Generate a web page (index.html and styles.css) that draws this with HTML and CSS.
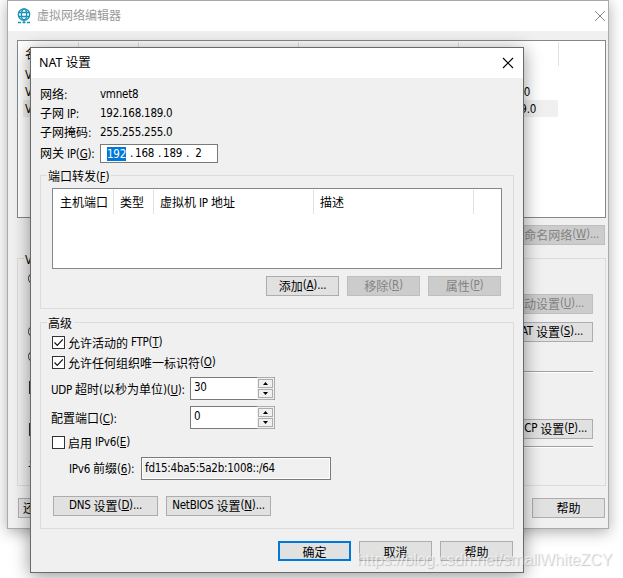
FILE: index.html
```
<!DOCTYPE html>
<html lang="zh-CN">
<head>
<meta charset="utf-8">
<title>NAT 设置</title>
<link rel="stylesheet" href="styles.css">
</head>
<body>
<div class="desktop">
  <section class="window editor">
    <header class="titlebar">
      <svg class="globe" width="14" height="16" viewBox="0 0 14 16" fill="none" stroke="#1593b8" stroke-width="1.3">
        <circle cx="7" cy="6.5" r="5.7"/><ellipse cx="7" cy="6.5" rx="2.6" ry="5.5"/>
        <path d="M1.8 4.5h10.4M1.8 8.5h10.4M7 12v2"/><path d="M1 14.5h3M5.5 14.5h3M10 14.5h3"/>
      </svg>
      <h1>虚拟网络编辑器</h1>
      <svg class="close" width="12" height="12" viewBox="0 0 12 12" stroke="#888"><path d="M1 1l10 10M11 1L1 11"/></svg>
    </header>
    <div class="editor-list">
      <div class="editor-head"><span>名</span><span></span><span></span><span></span><span></span></div>
      <div class="editor-row"><i>VM</i></div>
      <div class="editor-row"><i>VM</i><i class="tail">0</i></div>
      <div class="editor-row selected"><i>VM</i><i class="tail">9.0</i></div>
    </div>
    <button class="btn disabled rename">命名网络<i>(<u>W</u>)...</i></button>
    <fieldset class="group editor-group">
      <legend><i>VM</i></legend>
      <div class="left-edge">
        <span class="radio r1"></span><span class="radio r2"></span><span class="radio r3"></span>
        <span class="check c1"></span><span class="check c2"></span><span class="sub">子</span>
      </div>
      <div class="right-edge">
        <button class="btn disabled auto">动设置<i>(<u>U</u>)...</i></button>
        <button class="btn nat"><i>NAT </i>设置<i>(<u>S</u>)...</i></button>
        <div class="rule"></div>
        <button class="btn dhcp"><i>DHCP </i>设置<i>(<u>P</u>)...</i></button>
        <div class="rule last"></div>
      </div>
    </fieldset>
    <footer class="editor-foot">
      <button class="btn restore">还</button><button class="btn">帮助</button>
    </footer>
  </section>

  <section class="window dialog">
    <header class="titlebar">
      <h1>NAT 设置</h1>
      <svg class="close" width="12" height="12" viewBox="0 0 12 12" stroke="#000" stroke-width="1.1"><path d="M1 1l10 10M11 1L1 11"/></svg>
    </header>
    <dl class="info">
      <dt>网络<i>:</i></dt><dd><i>vmnet8</i></dd>
      <dt>子网<i> IP:</i></dt><dd><i>192.168.189.0</i></dd>
      <dt>子网掩码<i>:</i></dt><dd><i>255.255.255.0</i></dd>
    </dl>
    <div class="gateway">
      <label>网关<i> IP(<u>G</u>):</i></label>
      <div class="ip"><i class="picked">192</i><i>.</i><i class="oct">168</i><i>.</i><i class="oct">189</i><i>.</i><i class="oct end">2</i></div>
    </div>
    <fieldset class="group forward">
      <legend>端口转发<i>(<u>F</u>)</i></legend>
      <div class="ports"><div class="ports-head">
        <span>主机端口</span><span>类型</span><span>虚拟机<i> IP </i>地址</span><span>描述</span>
      </div></div>
      <div class="actions">
        <button class="btn">添加<i>(<u>A</u>)...</i></button>
        <button class="btn disabled">移除<i>(<u>R</u>)</i></button>
        <button class="btn disabled">属性<i>(<u>P</u>)</i></button>
      </div>
    </fieldset>
    <fieldset class="group advanced">
      <legend>高级</legend>
      <label class="option"><svg class="box" width="13" height="13" viewBox="0 0 11 11"><path d="M1.5 5.5l2.8 2.8L9.8 2.3"/></svg>允许活动的<i> FTP(<u>T</u>)</i></label>
      <label class="option"><svg class="box" width="13" height="13" viewBox="0 0 11 11"><path d="M1.5 5.5l2.8 2.8L9.8 2.3"/></svg>允许任何组织唯一标识符<i>(<u>O</u>)</i></label>
      <div class="field">
        <label><i>UDP </i>超时<i>(</i>以秒为单位<i>)(<u>U</u>):</i></label>
        <div class="spin"><i>30</i><div class="arrows"><b class="up"></b><b class="down"></b></div></div>
      </div>
      <div class="field second">
        <label>配置端口<i>(<u>C</u>):</i></label>
        <div class="spin"><i>0</i><div class="arrows"><b class="up"></b><b class="down"></b></div></div>
      </div>
      <label class="option ipv6"><span class="box"></span>启用<i> IPv6(<u>E</u>)</i></label>
      <div class="prefix">
        <label><i>IPv6 </i>前缀<i>(<u>6</u>):</i></label>
        <div class="readonly"><i>fd15:4ba5:5a2b:1008::/64</i></div>
      </div>
      <div class="more">
        <button class="btn"><i>DNS </i>设置<i>(<u>D</u>)...</i></button>
        <button class="btn"><i>NetBIOS </i>设置<i>(<u>N</u>)...</i></button>
      </div>
    </fieldset>
    <footer class="dialog-foot">
      <button class="btn primary">确定</button><button class="btn">取消</button><button class="btn">帮助</button>
    </footer>
  </section>
  <div class="watermark">https://blog.csdn.net/smallWhiteZCY</div>
</div>
</body>
</html>
```
FILE: styles.css
```
* { box-sizing: border-box; }
body { margin: 0; background: #fff; }
body, button { font: 12px/15px "Noto Sans CJK SC", sans-serif; color: #000; }
i { font: 11.5px/15px "DejaVu Sans Condensed", "DejaVu Sans", sans-serif; font-stretch: condensed; letter-spacing: -.25px; white-space: pre; }
u { text-underline-offset: 1px; text-decoration-thickness: 1px; }
h1, dl, dd { margin: 0; }
.desktop { position: relative; width: 623px; height: 578px; overflow: hidden; }
.window { position: absolute; background: #f0f0f0; border: 1px solid #aaa; }
.editor { left: 7px; top: 0; width: 602px; height: 529px; box-shadow: 0 3px 14px rgba(0,0,0,.32); }
.dialog { left: 30px; top: 47px; width: 494px; height: 526px; border-color: #6a6a6a; box-shadow: 0 3px 17px rgba(0,0,0,.42); }

.titlebar { display: flex; align-items: center; height: 30px; background: #fff; padding: 0 9px 0 8px; }
.titlebar h1 { flex: 1; font: 12.5px/18px "Noto Sans", "Noto Sans CJK SC", sans-serif; }
.editor .titlebar { padding: 0 2px 0 9px; }
.editor h1 { color: #999; margin-left: 6px; font-size: 12px; }
.close { display: block; }

.btn { display: flex; align-items: center; justify-content: center; width: 73px; height: 20px; padding: 0 0 1px; background: #e1e1e1; border: 1px solid #adadad; white-space: nowrap; border-radius: 0; }
.btn.disabled { background: #ccc; border-color: #bfbfbf; color: #838383; }
.btn.primary { border: 2px solid #0078d7; }

.editor-list { width: 589px; height: 178px; margin: 9px 0 0 9px; background: #fff; border: 1px solid #828790; padding-top: 1px; }
.editor-head { display: flex; height: 24px; }
.editor-head span { width: 60px; border-right: 1px solid #e0e0e0; padding: 4px 0 0 7px; }
.editor-head span:nth-child(1) { width: 61px; }
.editor-head span:nth-child(3), .editor-head span:nth-child(4) { width: 160px; }
.editor-head span:nth-child(5) { width: 100px; }
.editor-row { display: flex; justify-content: space-between; width: 535px; height: 17px; margin-left: 5px; padding: 2px 28px 0 2px; }
.editor-row.selected { background: #f0f0f0; padding-right: 22px; }
.rename { width: 110px; margin: 7px 0 0 487px; justify-content: flex-end; padding-right: 5px; }

.group { min-width: 0; margin: 0; padding: 0; border: 1px solid #dcdcdc; }
.group legend { height: 15px; margin-left: 6px; padding: 0 2px 0 1px; }
.editor-group { width: 589px; height: 235px; margin: 6px 0 0 9px; display: flex; justify-content: space-between; }
.left-edge { padding-left: 10px; }
.left-edge span { display: block; }
.radio { width: 13px; height: 13px; border: 1px solid #333; border-radius: 50%; background: #fff; }
.r1 { margin-top: 6px; } .r2 { margin-top: 40px; } .r3 { margin-top: 12px; }
.check { width: 13px; height: 13px; margin-left: 1px; border: 1px solid #333; background: #fff; }
.c1 { margin-top: 18px; } .c2 { margin-top: 29px; }
.sub { margin-top: 22px; }
.right-edge { width: 106px; margin-right: 12px; }
.right-edge .btn { justify-content: flex-end; width: 106px; }
.auto { margin-top: 28px; padding-right: 8px; }
.nat { margin-top: 8px; padding-right: 9px; }
.dhcp { margin-top: 46px; padding-right: 5px; }
.rule { height: 2px; margin-top: 29px; background: #a0a0a0; border-bottom: 1px solid #fff; }
.rule.last { margin-top: 7px; }
.editor-foot { display: flex; justify-content: space-between; margin: 12px 3px 0 10px; }
.restore { justify-content: flex-start; padding-left: 4px; }

.info { display: grid; grid-template-columns: 60px auto; grid-auto-rows: 19px; align-items: center; margin: 7px 0 0 9px; }
.info dd { margin-top: -2px; }
.gateway { display: flex; align-items: center; height: 19px; margin: 2px 0 0 9px; }
.gateway label { width: 60px; white-space: nowrap; }
.ip { display: flex; align-items: center; width: 118px; height: 19px; padding-left: 6px; background: #fff; border: 1px solid #7a7a7a; }
.picked { width: 19px; height: 14px; line-height: 14px; background: #0078d7; color: #fff; margin-right: 4px; }
.oct { width: 20px; margin: 0 3px 0 2px; }
.oct.end { padding-left: 4px; }
.forward { width: 474px; height: 141px; margin: 5px 0 0 9px; }
.ports { width: 450px; height: 81px; margin: 5px 0 0 11px; background: #fff; border: 1px solid #828790; padding-top: 1px; }
.ports-head { display: flex; height: 24px; }
.ports-head span { height: 24px; border-right: 1px solid #e0e0e0; padding: 4px 0 0 6px; white-space: nowrap; }
.ports-head span:nth-child(1) { width: 61px; padding-left: 7px; }
.ports-head span:nth-child(2) { width: 40px; }
.ports-head span:nth-child(3), .ports-head span:nth-child(4) { width: 160px; }
.actions { display: flex; gap: 8px; margin: 7px 0 0 225px; }
.advanced { width: 474px; height: 214px; margin: 6px 0 0 9px; }
.option { display: flex; align-items: center; height: 13px; margin: 6px 0 0 11px; }
.option + .option { margin-top: 7px; }
.box { width: 13px; height: 13px; margin-right: 3px; background: #fff; border: 1px solid #333; }
.box path { fill: none; stroke: #111; stroke-width: 1.2; }
.field { display: flex; align-items: center; height: 23px; margin: 8px 0 0 10px; }
.field.second { margin-top: 6px; }
.field label { width: 139px; white-space: nowrap; padding-top: 1px; }
.spin { display: flex; justify-content: space-between; width: 85px; height: 23px; padding: 2px 0 0 3px; background: #fff; border: 1px solid #7a7a7a; border-right-color: #adadad; }
.arrows { width: 17px; height: 23px; margin-top: -3px; padding: 1px 1px 1px; background: #f0f0f0; border: solid #abadb3; border-width: 1px 0; }
.arrows b { display: flex; align-items: center; justify-content: center; width: 15px; height: 9px; border: 1px solid #adadad; }
.arrows b + b { margin-top: 1px; }
.arrows b::after { content: ""; width: 5px; height: 3px; background: #000; clip-path: polygon(50% 0, 100% 100%, 0 100%); }
.arrows .down::after { clip-path: polygon(0 0, 100% 0, 50% 100%); }
.option.ipv6 { margin-top: 7px; }
.prefix { display: flex; align-items: center; margin: 8px 0 0 28px; }
.prefix label { width: 72px; white-space: nowrap; }
.readonly { width: 190px; height: 23px; padding: 1px 0 0 3px; border: 1px solid #7a7a7a; box-shadow: inset 0 0 0 1px #fff; }
.more { display: flex; gap: 8px; margin: 16px 0 0 12px; }
.more .btn { width: 105px; }
.dialog-foot { display: flex; gap: 8px; margin: 12px 0 0 247px; }
.dialog-foot .btn { padding: 1px 0 0; }
.watermark { position: absolute; left: 357px; top: 550px; font: 16px/20px "Liberation Sans", sans-serif; letter-spacing: -.08px; color: rgba(255,255,255,.6); text-shadow: 1px 1px 1px rgba(120,120,120,.4); white-space: nowrap; }
```
